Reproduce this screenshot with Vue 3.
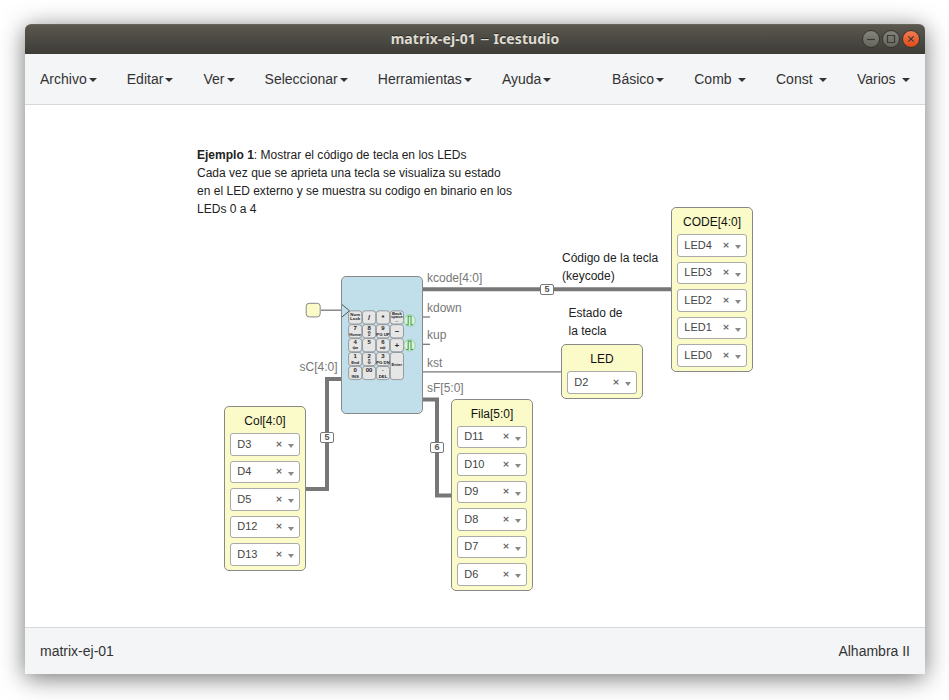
<script setup>
const mainMenu = ['Archivo', 'Editar', 'Ver', 'Seleccionar', 'Herramientas', 'Ayuda']
const blockMenu = [
  { name: 'Básico', spaced: false },
  { name: 'Comb', spaced: true },
  { name: 'Const', spaced: true },
  { name: 'Varios', spaced: true },
]

const blocks = [
  { name: 'Col[4:0]', x: 199, y: 301.4, pins: ['D3', 'D4', 'D5', 'D12', 'D13'] },
  { name: 'Fila[5:0]', x: 426, y: 293.9, pins: ['D11', 'D10', 'D9', 'D8', 'D7', 'D6'] },
  { name: 'CODE[4:0]', x: 646, y: 102.4, pins: ['LED4', 'LED3', 'LED2', 'LED1', 'LED0'] },
  { name: 'LED', x: 536, y: 239.4, pins: ['D2'] },
]

const ports = [
  { name: 'kcode[4:0]', x: 402, y: 167 },
  { name: 'kdown', x: 402, y: 197 },
  { name: 'kup', x: 402, y: 224 },
  { name: 'kst', x: 402, y: 252 },
  { name: 'sF[5:0]', x: 402, y: 277 },
  { name: 'sC[4:0]', x: 274.5, y: 256 },
]

const sizes = [
  { bits: 5, x: 515, y: 179 },
  { bits: 5, x: 295, y: 327 },
  { bits: 6, x: 405, y: 337 },
]

const keys = [
  ['Num', 'Lock'], ['/'], ['*'], ['Back', 'space', '←'],
  ['7', 'Home'], ['8', '⇧'], ['9', 'PG UP'], ['−'],
  ['4', '⇦'], ['5', ''], ['6', '⇨'], ['+'],
  ['1', 'End'], ['2', '⇩'], ['3', 'PG DN'], ['Enter'],
  ['0', 'INS'], ['00', ''], ['·', 'DEL'],
].map((lines, i) => {
  const col = i % 4
  const row = Math.floor(i / 4)
  const tall = lines[0] === 'Enter'
  const y = row * 13.9
  let text
  if (lines.length === 1) {
    text = [{ t: lines[0], y: y + (tall ? 14 : 9.2), s: tall ? 4.2 : 7.5 }]
  } else if (lines.length === 3) {
    text = lines.map((t, n) => ({ t, y: y + 4 + n * 3.7, s: 4.2 }))
  } else if (lines[0] === 'Num') {
    text = lines.map((t, n) => ({ t, y: y + 5 + n * 3.8, s: 4.4 }))
  } else {
    text = [{ t: lines[0], y: y + 5.6, s: 6 }, { t: lines[1], y: y + 11.2, s: lines[1].length === 1 ? 7 : 4.3 }]
  }
  return { x: col * 13.9, y, h: tall ? 27.1 : 13.2, text }
})
</script>

<template>
  <div class="desktop">
    <div class="window">
      <header class="titlebar">
        <span class="title">matrix-ej-01 <span class="dash">–</span> Icestudio</span>
        <div class="controls">
          <i class="control"><svg viewBox="0 0 16 16"><path d="M4 8.5h8" /></svg></i>
          <i class="control"><svg viewBox="0 0 16 16"><path d="M4.5 4.5h7v7h-7z" /></svg></i>
          <i class="control close"><svg viewBox="0 0 16 16"><path d="M5.3 5.3l5.4 5.4M10.7 5.3l-5.4 5.4" /></svg></i>
        </div>
      </header>

      <nav class="navbar">
        <ul class="menu">
          <li v-for="m in mainMenu" :key="m">{{ m }}<b class="caret"></b></li>
        </ul>
        <ul class="menu">
          <li v-for="m in blockMenu" :key="m.name" :class="{ spaced: m.spaced }">{{ m.name }}<b class="caret"></b></li>
        </ul>
      </nav>

      <main class="canvas">
        <svg class="wires" viewBox="0 0 900 522">
          <g class="bus">
            <path d="M398 184.2H646" />
            <path d="M398 294.5H412V390.5H426" />
            <path d="M316 274H302V384H281" />
          </g>
          <g class="wire">
            <path d="M296 205.2H316" />
            <path d="M398 212H405" />
            <path d="M398 239.3H405" />
            <path d="M398 266.8H536" />
          </g>
          <rect class="clock" x="281.2" y="198.3" width="14" height="13.6" rx="3" />
        </svg>

        <div class="chip">
          <svg viewBox="0 0 82 138">
            <path class="clk" d="M1 28.5L8.5 34.8L1 41" />
            <g transform="translate(7.6 34.8)">
              <g v-for="(k, i) in keys" :key="i">
                <rect class="key" :x="k.x" :y="k.y" width="13.2" :height="k.h" rx="2.8" />
                <text v-for="(l, n) in k.text" :key="n" :x="k.x + 6.6" :y="l.y" :font-size="l.s">{{ l.t }}</text>
              </g>
            </g>
            <g v-for="y in [44.5, 69.3]" :key="y" :transform="`translate(68.6 ${y})`">
              <circle class="pulse-bg" r="5.7" />
              <path class="pulse" d="M-3.4 4.2H-1.4V-4.2H1.4V4.2H3.4" />
            </g>
          </svg>
        </div>

        <span
          v-for="p in ports"
          :key="p.name"
          class="port"
          :style="{ left: p.x + 'px', top: p.y + 'px' }"
        >{{ p.name }}</span>

        <span
          v-for="(s, i) in sizes"
          :key="i"
          class="size"
          :style="{ left: s.x + 'px', top: s.y + 'px' }"
        >{{ s.bits }}</span>

        <section
          v-for="b in blocks"
          :key="b.name"
          class="block"
          :style="{ left: b.x + 'px', top: b.y + 'px' }"
        >
          <h3>{{ b.name }}</h3>
          <div class="pins">
            <div v-for="p in b.pins" :key="p" class="pin">
              <span class="pin-name">{{ p }}</span>
              <span class="clear">×</span>
              <b class="arrow"></b>
            </div>
          </div>
        </section>

        <p class="note intro">
          <strong>Ejemplo 1</strong>: Mostrar el código de tecla en los LEDs<br />
          Cada vez que se aprieta una tecla se visualiza su estado<br />
          en el LED externo y se muestra su codigo en binario en los<br />
          LEDs 0 a 4
        </p>
        <p class="note code">Código de la tecla<br />(keycode)</p>
        <p class="note state">Estado de<br />la tecla</p>
      </main>

      <footer class="footer">
        <span>matrix-ej-01</span>
        <span>Alhambra II</span>
      </footer>
    </div>
  </div>
</template>

<style>
body {
  margin: 0;
  background: #fff;
}
</style>

<style scoped>
.desktop {
  box-sizing: border-box;
  width: 949px;
  height: 700px;
  padding: 24px 24px 26px 25px;
  overflow: hidden;
  font-family: "Liberation Sans", Arial, sans-serif;
  color: #333;
}
.window {
  display: flex;
  flex-direction: column;
  height: 650px;
  border-radius: 6px 6px 0 0;
  background: #fff;
  box-shadow: 0 4px 24px rgba(0, 0, 0, 0.55);
}
.titlebar {
  position: relative;
  box-sizing: border-box;
  display: flex;
  align-items: center;
  justify-content: center;
  height: 30px;
  border-radius: 6px 6px 0 0;
  border-top: 1px solid #66645b;
  background: linear-gradient(#59574e, #3d3c37);
}
.title {
  margin-bottom: 2px;
  font: bold 14px/27px "Noto Sans", sans-serif;
  letter-spacing: 0.1px;
  color: #dfdbd2;
  text-shadow: 0 -1px 0 #2b2a26;
  white-space: nowrap;
}
.dash {
  display: inline-block;
  width: 10px;
  font-weight: normal;
  text-align: center;
  transform: scaleX(1.3);
}
.controls {
  position: absolute;
  right: 5px;
  top: 5px;
  display: flex;
  gap: 2px;
}
.control {
  box-sizing: border-box;
  width: 18px;
  height: 18px;
  border: 1px solid #35342f;
  border-radius: 50%;
  background: linear-gradient(#85847c, #66645c);
}
.control svg {
  display: block;
  width: 16px;
  height: 16px;
}
.control path {
  fill: none;
  stroke: #3a3934;
  stroke-width: 1.2;
}
.close {
  background: linear-gradient(#f47b54, #df4a16);
}
.navbar {
  box-sizing: border-box;
  display: flex;
  justify-content: space-between;
  height: 51px;
  background: #f4f5f7;
  border-bottom: 1px solid #d5d8dc;
}
.menu {
  display: flex;
  margin: 0;
  padding: 0;
  list-style: none;
}
.menu li {
  display: flex;
  align-items: center;
  padding: 0 15px;
  font-size: 14px;
  line-height: 50px;
}
.menu .caret {
  margin: 2px 0 0 2.1px;
  border-top: 4px solid #333;
  border-left: 4px solid transparent;
  border-right: 4px solid transparent;
}
.menu .spaced .caret {
  margin-left: 6.4px;
}
.canvas {
  position: relative;
  flex: 1;
  overflow: hidden;
}
.wires {
  position: absolute;
  left: 0;
  top: 0;
  width: 900px;
  height: 522px;
}
.wires path {
  fill: none;
  stroke: #777;
}
.bus path {
  stroke-width: 4;
}
.wire path {
  stroke-width: 1.3;
}
.wires .clock {
  fill: #fbfbc9;
  stroke: #888;
}
.chip {
  position: absolute;
  left: 316px;
  top: 171px;
  box-sizing: border-box;
  width: 82px;
  height: 138px;
  border: 1px solid #888;
  border-radius: 5px;
  background: #c0dfeb;
}
.chip svg {
  display: block;
  width: 82px;
  height: 138px;
  margin: -1px;
}
.clk {
  fill: none;
  stroke: #555;
}
.key {
  fill: #e6e6e6;
  stroke: #85898c;
  stroke-width: 0.8;
}
.chip text {
  font-family: "Liberation Sans", "DejaVu Sans", sans-serif;
  font-weight: bold;
  text-anchor: middle;
  fill: #222;
}
.pulse-bg {
  fill: #dcefdc;
  stroke: #8cc493;
  stroke-width: 0.8;
}
.pulse {
  fill: none;
  stroke: #3fa64a;
  stroke-width: 1.1;
}
.port {
  position: absolute;
  font-size: 12px;
  line-height: 1;
  color: #777;
  white-space: nowrap;
}
.size {
  position: absolute;
  box-sizing: border-box;
  width: 14px;
  height: 11px;
  border: 1px solid #777;
  border-radius: 2px;
  background: #fff;
  font-size: 9px;
  font-weight: bold;
  line-height: 9px;
  text-align: center;
  color: #555;
}
.block {
  position: absolute;
  box-sizing: border-box;
  width: 82px;
  padding: 0 5px 4.6px;
  border: 1px solid #888;
  border-radius: 5px;
  background: #fbfbc9;
}
.block h3 {
  margin: 0;
  height: 26px;
  font-size: 12px;
  font-weight: normal;
  line-height: 28.2px;
  text-align: center;
  color: #111;
  white-space: nowrap;
}
.pins {
  display: grid;
  gap: 5.1px;
}
.pin {
  box-sizing: border-box;
  display: flex;
  align-items: center;
  height: 22.4px;
  padding: 0 5px 0 6.3px;
  border: 1px solid #aaa;
  border-radius: 3px;
  background: #fff;
}
.pin-name {
  flex: 1;
  margin-bottom: 0.8px;
  font-size: 11px;
  line-height: 19px;
  color: #444;
}
.clear {
  margin-bottom: 1px;
  font-family: "DejaVu Sans", sans-serif;
  font-size: 9px;
  font-weight: bold;
  line-height: 19px;
  color: #666;
}
.arrow {
  margin: 3px 0 0 5.3px;
  border-top: 4.5px solid #888;
  border-left: 3.5px solid transparent;
  border-right: 3.5px solid transparent;
}
.note {
  position: absolute;
  margin: 0;
  font-size: 12px;
  line-height: 18px;
  color: #222;
  white-space: nowrap;
}
.intro {
  left: 172px;
  top: 41px;
  letter-spacing: 0.015px;
}
.code {
  left: 537px;
  top: 144px;
}
.state {
  left: 543.5px;
  top: 199px;
}
.footer {
  box-sizing: border-box;
  display: flex;
  justify-content: space-between;
  height: 47px;
  padding: 0 15px;
  border-top: 1px solid #d5d8dc;
  background: #f4f5f7;
  font-size: 14px;
  line-height: 46px;
}
</style>
